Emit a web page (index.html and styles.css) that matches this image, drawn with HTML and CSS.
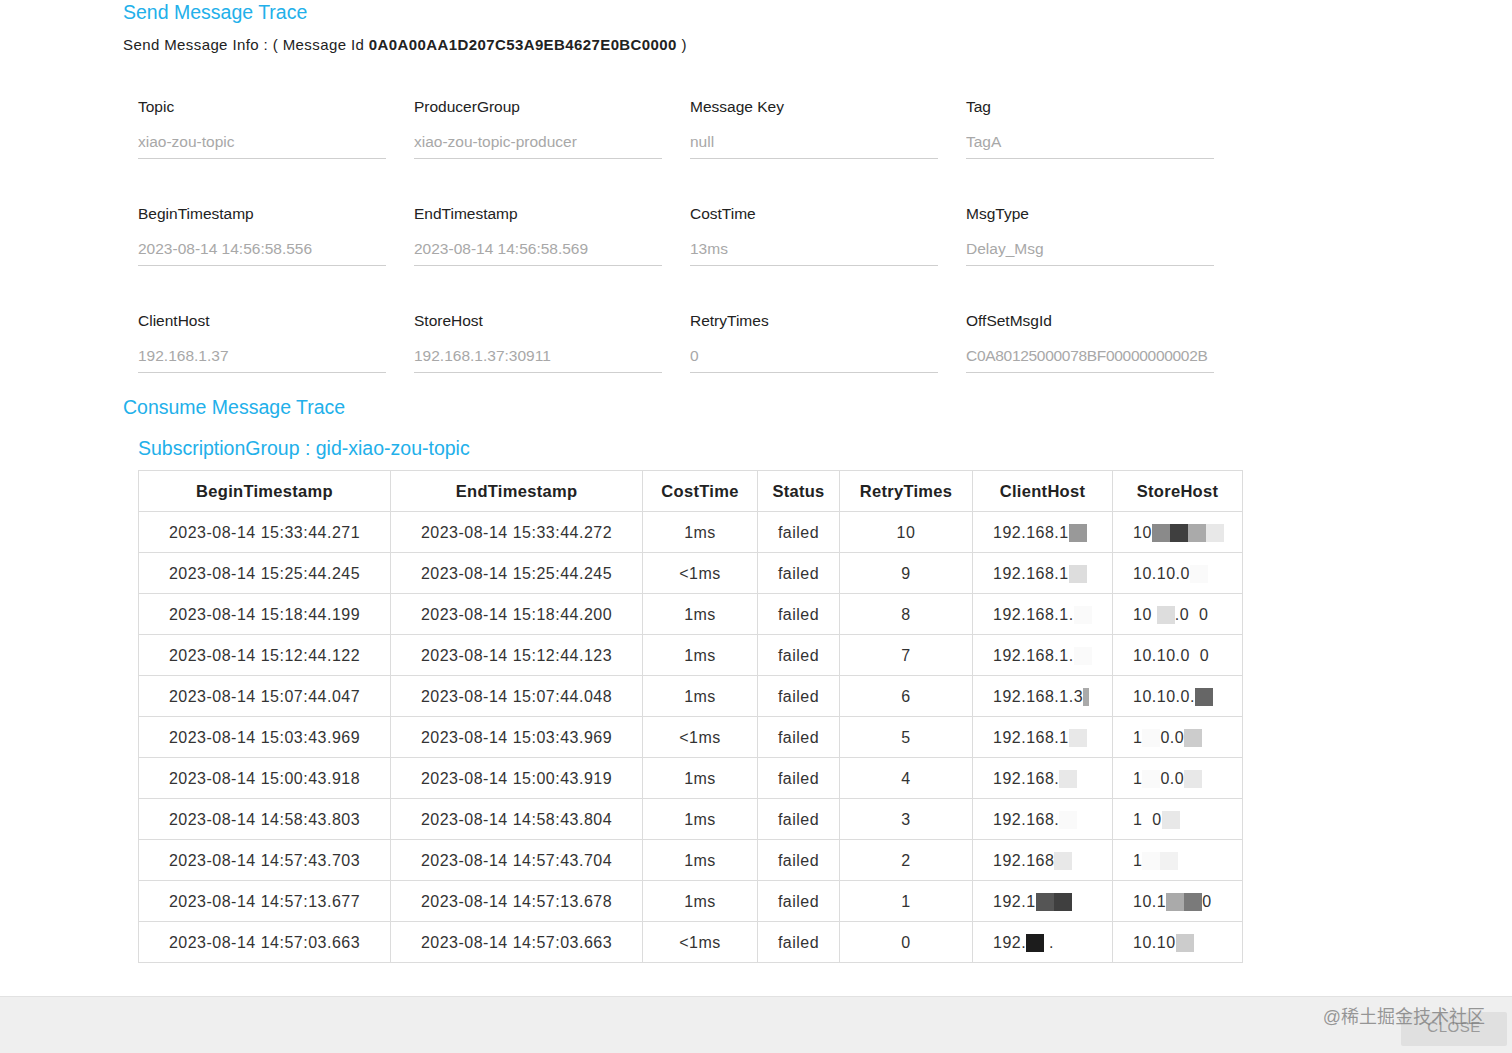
FILE: index.html
```html
<!DOCTYPE html>
<html lang="en">
<head>
<meta charset="utf-8">
<title>Message Trace</title>
<link rel="stylesheet" href="styles.css">
</head>
<body>
<div class="page">
  <h2 class="title">Send Message Trace</h2>
  <div class="info">Send Message Info : ( Message Id <b>0A0A00AA1D207C53A9EB4627E0BC0000</b> )</div>

  <div class="fields">
    <div class="field"><div class="label">Topic</div><div class="value">xiao-zou-topic</div></div>
    <div class="field"><div class="label">ProducerGroup</div><div class="value">xiao-zou-topic-producer</div></div>
    <div class="field"><div class="label">Message Key</div><div class="value">null</div></div>
    <div class="field"><div class="label">Tag</div><div class="value">TagA</div></div>

    <div class="field"><div class="label">BeginTimestamp</div><div class="value">2023-08-14 14:56:58.556</div></div>
    <div class="field"><div class="label">EndTimestamp</div><div class="value">2023-08-14 14:56:58.569</div></div>
    <div class="field"><div class="label">CostTime</div><div class="value">13ms</div></div>
    <div class="field"><div class="label">MsgType</div><div class="value">Delay_Msg</div></div>

    <div class="field"><div class="label">ClientHost</div><div class="value">192.168.1.37</div></div>
    <div class="field"><div class="label">StoreHost</div><div class="value">192.168.1.37:30911</div></div>
    <div class="field"><div class="label">RetryTimes</div><div class="value">0</div></div>
    <div class="field"><div class="label">OffSetMsgId</div><div class="value clip">C0A80125000078BF00000000002B</div></div>
  </div>

  <h2 class="title consume">Consume Message Trace</h2>
  <h3 class="group">SubscriptionGroup : gid-xiao-zou-topic</h3>

  <table class="trace">
    <colgroup>
      <col class="c1"><col class="c2"><col class="c3"><col class="c4"><col class="c5"><col class="c6"><col class="c7">
    </colgroup>
    <thead>
      <tr><th>BeginTimestamp</th><th>EndTimestamp</th><th>CostTime</th><th>Status</th><th>RetryTimes</th><th>ClientHost</th><th>StoreHost</th></tr>
    </thead>
    <tbody>
      <tr><td>2023-08-14 15:33:44.271</td><td>2023-08-14 15:33:44.272</td><td>1ms</td><td>failed</td><td>10</td><td class="l">192.168.1<span class="blk g9"></span></td><td class="l">10<span class="blk g8"></span><span class="blk g3"></span><span class="blk ga"></span><span class="blk ge"></span></td></tr>
      <tr><td>2023-08-14 15:25:44.245</td><td>2023-08-14 15:25:44.245</td><td>&lt;1ms</td><td>failed</td><td>9</td><td class="l">192.168.1<span class="blk gd"></span></td><td class="l">10.10.0<span class="blk gw"></span></td></tr>
      <tr><td>2023-08-14 15:18:44.199</td><td>2023-08-14 15:18:44.200</td><td>1ms</td><td>failed</td><td>8</td><td class="l">192.168.1.<span class="blk gw"></span></td><td class="l">10 <span class="blk gd"></span>.0 &nbsp;0</td></tr>
      <tr><td>2023-08-14 15:12:44.122</td><td>2023-08-14 15:12:44.123</td><td>1ms</td><td>failed</td><td>7</td><td class="l">192.168.1.<span class="blk gw"></span></td><td class="l">10.10.0 &nbsp;0</td></tr>
      <tr><td>2023-08-14 15:07:44.047</td><td>2023-08-14 15:07:44.048</td><td>1ms</td><td>failed</td><td>6</td><td class="l">192.168.1.3<span class="blk narrow ga"></span></td><td class="l">10.10.0.<span class="blk g6"></span></td></tr>
      <tr><td>2023-08-14 15:03:43.969</td><td>2023-08-14 15:03:43.969</td><td>&lt;1ms</td><td>failed</td><td>5</td><td class="l">192.168.1<span class="blk ge"></span></td><td class="l">1<span class="blk gw"></span>0.0<span class="blk gc"></span></td></tr>
      <tr><td>2023-08-14 15:00:43.918</td><td>2023-08-14 15:00:43.919</td><td>1ms</td><td>failed</td><td>4</td><td class="l">192.168.<span class="blk ge"></span></td><td class="l">1<span class="blk gw"></span>0.0<span class="blk ge"></span></td></tr>
      <tr><td>2023-08-14 14:58:43.803</td><td>2023-08-14 14:58:43.804</td><td>1ms</td><td>failed</td><td>3</td><td class="l">192.168.<span class="blk gw"></span></td><td class="l">1 &nbsp;0<span class="blk ge"></span></td></tr>
      <tr><td>2023-08-14 14:57:43.703</td><td>2023-08-14 14:57:43.704</td><td>1ms</td><td>failed</td><td>2</td><td class="l">192.168<span class="blk ge"></span></td><td class="l">1<span class="blk gw"></span><span class="blk gf"></span></td></tr>
      <tr><td>2023-08-14 14:57:13.677</td><td>2023-08-14 14:57:13.678</td><td>1ms</td><td>failed</td><td>1</td><td class="l">192.1<span class="blk g4"></span><span class="blk g3"></span></td><td class="l">10.1<span class="blk ga"></span><span class="blk g7"></span>0</td></tr>
      <tr><td>2023-08-14 14:57:03.663</td><td>2023-08-14 14:57:03.663</td><td>&lt;1ms</td><td>failed</td><td>0</td><td class="l">192.<span class="blk g1"></span> .</td><td class="l">10.10<span class="blk gc"></span></td></tr>
    </tbody>
  </table>
</div>

<div class="actions">
  <span class="watermark">@稀土掘金技术社区</span>
  <button class="close">CLOSE</button>
</div>
</body>
</html>
```

FILE: styles.css
```css
html, body {
  margin: 0;
  padding: 0;
  background: #ffffff;
  font-family: "Liberation Sans", Arial, Helvetica, sans-serif;
  color: #222;
}

.page {
  padding-left: 123px;
}

.title {
  margin: 0;
  font-size: 19.5px;
  line-height: 24px;
  font-weight: 400;
  color: #22b0ea;
}

.info {
  margin-top: 11px;
  font-size: 15px;
  line-height: 20px;
  letter-spacing: 0.4px;
  color: #222;
}

.info b {
  font-weight: 700;
}

.fields {
  margin-top: 42px;
  margin-left: 15px;
  display: grid;
  grid-template-columns: repeat(4, 248px);
  column-gap: 28px;
  row-gap: 45px;
}

.field .label {
  font-size: 15.5px;
  line-height: 20px;
  color: #222;
}

.field .value {
  margin-top: 15px;
  font-size: 15.5px;
  line-height: 20px;
  color: #a8a8a8;
  padding-bottom: 6px;
  border-bottom: 1px solid #cfcfcf;
  white-space: nowrap;
  overflow: hidden;
}

.value.clip {
  letter-spacing: -0.3px;
}

.consume {
  margin-top: 22px;
}

.group {
  margin: 17px 0 0 15px;
  font-size: 19.5px;
  line-height: 24px;
  font-weight: 400;
  color: #22b0ea;
}

.trace {
  margin: 10px 0 0 15px;
  border-collapse: collapse;
  table-layout: fixed;
  width: 1104px;
  border: 1px solid #dcdcdc;
}

.trace col.c1 { width: 252px; }
.trace col.c2 { width: 252px; }
.trace col.c3 { width: 115px; }
.trace col.c4 { width: 82px; }
.trace col.c5 { width: 133px; }
.trace col.c6 { width: 140px; }
.trace col.c7 { width: 130px; }

.trace th,
.trace td {
  border: 1px solid #dcdcdc;
  text-align: center;
  vertical-align: middle;
  white-space: nowrap;
  overflow: hidden;
}

.trace th {
  height: 39px;
  padding: 1px 0 0;
  font-size: 16.5px;
  letter-spacing: 0.3px;
  font-weight: 700;
  color: #222;
}

.trace td {
  height: 38px;
  padding: 2px 0 0;
  font-size: 16px;
  letter-spacing: 0.5px;
  color: #333;
}

.trace td.l {
  text-align: left;
  padding-left: 20px;
}

.blk {
  display: inline-block;
  width: 18px;
  height: 18px;
  vertical-align: -4px;
}

.blk.narrow { width: 6px; }
.g1 { background: #1c1c1c; }
.g3 { background: #3f3f3f; }
.g4 { background: #555555; }
.g6 { background: #666666; }
.g7 { background: #7a7a7a; }
.g8 { background: #8a8a8a; }
.g9 { background: #999999; }
.ga { background: #aaaaaa; }
.gc { background: #cccccc; }
.gd { background: #dddddd; }
.ge { background: #e8e8e8; }
.gf { background: #f2f2f2; }
.gw { background: #fafafa; }

.actions {
  position: relative;
  margin-top: 33px;
  height: 58px;
  background: #efefef;
  border-top: 1px solid #e2e2e2;
  display: flex;
  justify-content: flex-end;
  align-items: flex-start;
  padding-top: 15px;
  padding-right: 5px;
  box-sizing: border-box;
}

.close {
  width: 106px;
  height: 34px;
  border: none;
  border-radius: 2px;
  background: #e0e0e0;
  color: #9a9a9a;
  font-family: "Liberation Sans", Arial, sans-serif;
  font-size: 15px;
  line-height: 30px;
  letter-spacing: 0.5px;
  padding: 0 0 4px;
}

.watermark {
  position: absolute;
  right: 27px;
  top: 8px;
  font-family: "Liberation Sans", "Noto Sans CJK SC", sans-serif;
  font-size: 18px;
  color: rgba(120, 120, 120, 0.75);
  line-height: 24px;
}
```
